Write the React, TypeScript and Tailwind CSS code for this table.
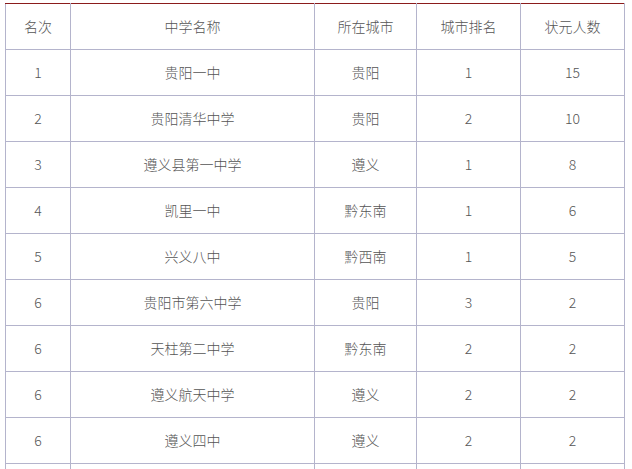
const header = ["名次", "中学名称", "所在城市", "城市排名", "状元人数"];

const rows = [
  ["1", "贵阳一中", "贵阳", "1", "15"],
  ["2", "贵阳清华中学", "贵阳", "2", "10"],
  ["3", "遵义县第一中学", "遵义", "1", "8"],
  ["4", "凯里一中", "黔东南", "1", "6"],
  ["5", "兴义八中", "黔西南", "1", "5"],
  ["6", "贵阳市第六中学", "贵阳", "3", "2"],
  ["6", "天柱第二中学", "黔东南", "2", "2"],
  ["6", "遵义航天中学", "遵义", "2", "2"],
  ["6", "遵义四中", "遵义", "2", "2"],
  // next row only shows its top edge in the crop
  ["", "", "", "", ""],
];

const widths = ["w-[65px]", "w-[244px]", "w-[102px]", "w-[104px]", "w-[104px]"];

export default function App() {
  return (
    <div
      className="h-[469px] overflow-hidden bg-white pl-[5px] pt-[3px]"
      style={{ fontFamily: '"Microsoft YaHei", "Noto Sans CJK SC", sans-serif' }}
    >
      <table className="w-[620px] table-fixed border-collapse text-[14px] font-light text-[#555]">
        <thead>
          <tr className="h-[46px]">
            {header.map((h, i) => (
              <th
                key={h}
                className={`${widths[i]} border border-[#b4b4cc] border-t-[#8b1c1c] text-center font-light`}
              >
                {h}
              </th>
            ))}
          </tr>
        </thead>
        <tbody>
          {rows.map((r, ri) => (
            <tr key={ri} className="h-[46px]">
              {r.map((c, ci) => (
                <td key={ci} className="border border-[#b4b4cc] text-center">
                  {c}
                </td>
              ))}
            </tr>
          ))}
        </tbody>
      </table>
    </div>
  );
}
